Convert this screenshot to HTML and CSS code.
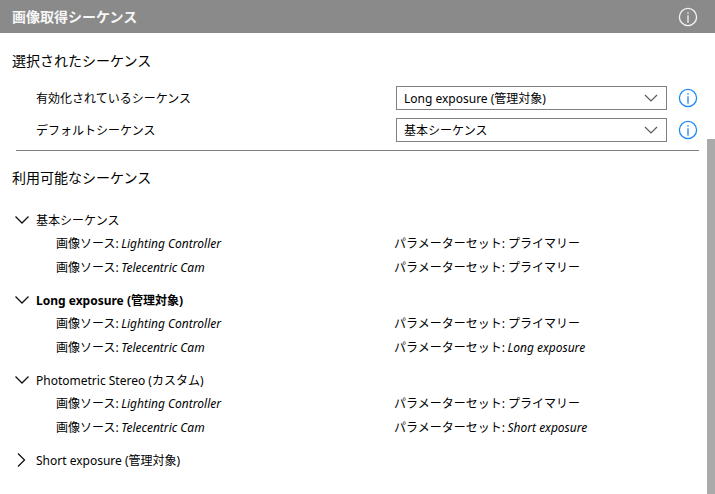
FILE: index.html
```html
<!DOCTYPE html>
<html lang="ja">
<head>
<meta charset="utf-8">
<title>画像取得シーケンス</title>
<link rel="stylesheet" href="styles.css">
</head>
<body>
<div class="app">
  <header class="header">
    <h1 class="header-title">画像取得シーケンス</h1>
    <svg class="info" viewBox="0 0 20 20"><circle cx="10" cy="10" r="8.6"/><path d="M10 8.3v7.4M10 5.3v1.4"/></svg>
  </header>
  <main class="content">
    <h2 class="section-title first">選択されたシーケンス</h2>
    <div class="form-row">
      <span class="form-label">有効化されているシーケンス</span>
      <div class="select"><span>Long exposure (管理対象)</span><svg class="select-caret" viewBox="0 0 14 8"><path d="M1 1l6 6 6-6"/></svg></div>
      <svg class="info blue" viewBox="0 0 20 20"><circle cx="10" cy="10" r="8.6"/><path d="M10 8.3v7.4M10 5.3v1.4"/></svg>
    </div>
    <div class="form-row">
      <span class="form-label">デフォルトシーケンス</span>
      <div class="select"><span>基本シーケンス</span><svg class="select-caret" viewBox="0 0 14 8"><path d="M1 1l6 6 6-6"/></svg></div>
      <svg class="info blue" viewBox="0 0 20 20"><circle cx="10" cy="10" r="8.6"/><path d="M10 8.3v7.4M10 5.3v1.4"/></svg>
    </div>
    <hr class="divider">
    <h2 class="section-title second">利用可能なシーケンス</h2>
    <div class="tree">
      <section class="group">
        <div class="group-head"><svg class="twist" viewBox="0 0 16 16"><path d="M1.5 4.5L8 11l6.5-6.5"/></svg><span>基本シーケンス</span></div>
        <div class="item"><span class="src">画像ソース: <i>Lighting Controller</i></span><span>パラメーターセット: プライマリー</span></div>
        <div class="item"><span class="src">画像ソース: <i>Telecentric Cam</i></span><span>パラメーターセット: プライマリー</span></div>
      </section>
      <section class="group">
        <div class="group-head active"><svg class="twist" viewBox="0 0 16 16"><path d="M1.5 4.5L8 11l6.5-6.5"/></svg><span>Long exposure (管理対象)</span></div>
        <div class="item"><span class="src">画像ソース: <i>Lighting Controller</i></span><span>パラメーターセット: プライマリー</span></div>
        <div class="item"><span class="src">画像ソース: <i>Telecentric Cam</i></span><span>パラメーターセット: <i>Long exposure</i></span></div>
      </section>
      <section class="group">
        <div class="group-head"><svg class="twist" viewBox="0 0 16 16"><path d="M1.5 4.5L8 11l6.5-6.5"/></svg><span>Photometric Stereo (カスタム)</span></div>
        <div class="item"><span class="src">画像ソース: <i>Lighting Controller</i></span><span>パラメーターセット: プライマリー</span></div>
        <div class="item"><span class="src">画像ソース: <i>Telecentric Cam</i></span><span>パラメーターセット: <i>Short exposure</i></span></div>
      </section>
      <section class="group">
        <div class="group-head"><svg class="twist" viewBox="0 0 16 16"><path d="M4 1.5L10.5 8 4 14.5"/></svg><span>Short exposure (管理対象)</span></div>
      </section>
    </div>
  </main>
  <div class="scrollbar"></div>
</div>
</body>
</html>
```
FILE: styles.css
```css
* { box-sizing: border-box; }
html, body { margin: 0; height: 100%; }
body {
  background: #fff;
  color: #000;
  font-family: "Noto Sans", "Noto Sans CJK JP", sans-serif;
  font-size: 12px;
  overflow: hidden;
}
.app { position: relative; width: 715px; height: 494px; overflow: hidden; }
.header {
  height: 33px;
  background: #8a8a8a;
  display: flex;
  align-items: center;
  justify-content: space-between;
  padding: 0 17.5px 0 12px;
}
.header-title { margin: 0; font-size: 14px; font-weight: 700; color: #f6f6f6; line-height: 33px; }
.info { width: 20px; height: 20px; flex: none; fill: none; stroke: #f4f4f4; stroke-width: 1.3; }
.info.blue { stroke: #1e88f5; }
.content { padding: 0 16px 0 12px; }
.section-title { margin: 0; font-size: 14px; font-weight: 400; line-height: 20px; color: #000; }
.section-title.first { padding-top: 18px; margin-bottom: 15px; }
.section-title.second { padding-top: 1px; }
.form-row { display: flex; align-items: center; height: 24px; margin-bottom: 8px; padding-left: 24px; }
.form-label { width: 360px; flex: none; }
.select {
  width: 271px;
  height: 24px;
  border: 1px solid #808080;
  display: flex;
  align-items: center;
  justify-content: space-between;
  padding: 0 8px 0 7px;
  flex: none;
}
.select-caret { width: 14px; height: 8px; fill: none; stroke: #5c5c5c; stroke-width: 1.2; }
.form-row .info { margin-left: 10.5px; }
.divider { border: 0; border-top: 1px solid #808080; margin: 0 0 16px 4px; }
.tree { padding-top: 20px; }
.group { margin-bottom: 9px; }
.group-head { display: flex; align-items: center; height: 23px; padding-left: 2px; gap: 6px; }
.group-head.active { font-weight: 700; }
.twist { width: 16px; height: 16px; flex: none; fill: none; stroke: #111; stroke-width: 1.3; }
.item { display: flex; height: 24px; align-items: center; padding-left: 44px; }
.item i { margin-left: -0.5px; }
.src { width: 338px; flex: none; }
.scrollbar { position: absolute; right: 0; top: 139px; bottom: 0; width: 8px; background: #aaa; }
```
